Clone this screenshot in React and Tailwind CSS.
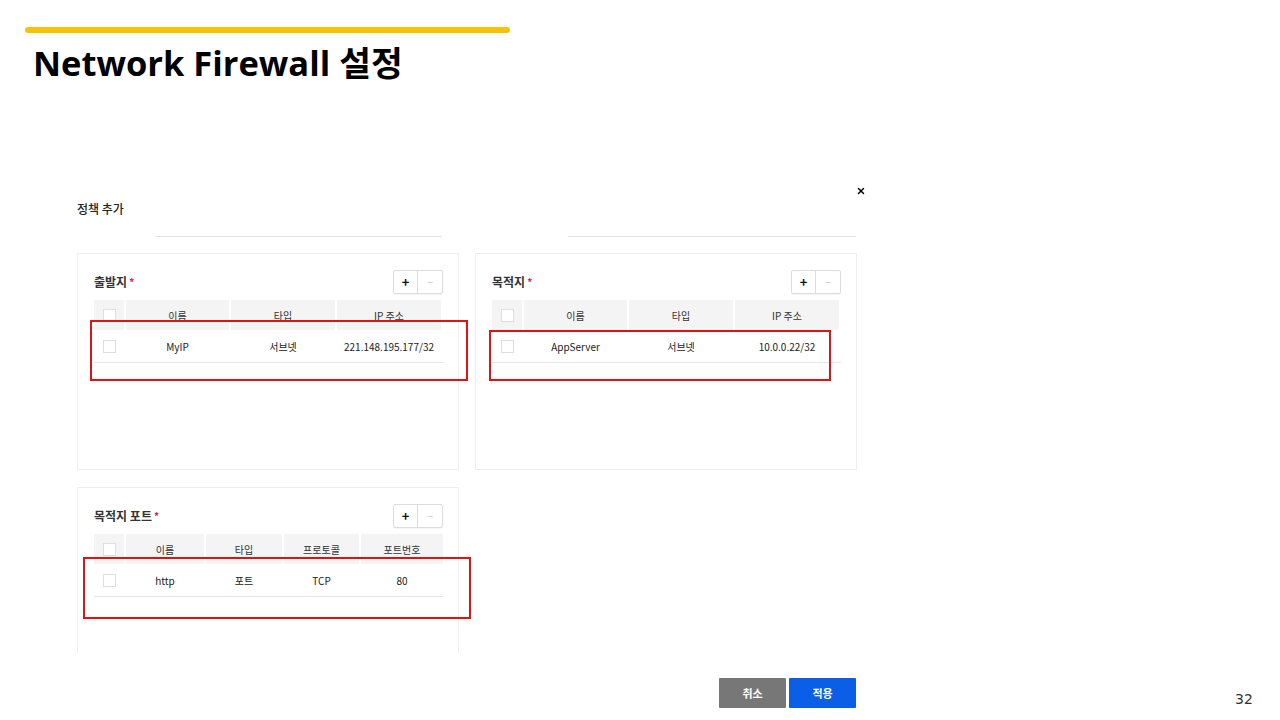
import React from "react";
import { X } from "lucide-react";

const uiFont = { fontFamily: '"Noto Sans CJK KR", "Noto Sans", sans-serif' };

const PlusMinus = () => (
  <div className="flex border border-[#dcdcdc] rounded-[2px] bg-white shadow-[0_1px_1px_rgba(0,0,0,0.04)]">
    <div className="w-6 h-[22px] flex items-center justify-center text-[13px] font-bold text-[#111] border-r border-[#dcdcdc]">+</div>
    <div className="w-6 h-[22px] flex items-center justify-center text-[11px] text-[#c8c8c8]">−</div>
  </div>
);

const Check = () => <div className="w-[13px] h-[13px] border border-[#dedede] bg-white" />;

const DataTable = ({ cols, widths, row }) => (
  <div className="w-[349px]">
    <div className="flex gap-[2px] h-[30px]">
      <div className="w-[30px] bg-[#f4f4f4] flex items-center justify-center">
        <Check />
      </div>
      {cols.map((c, i) => (
        <div
          key={c}
          className="bg-[#f4f4f4] flex items-center justify-center text-[10px] text-[#333]"
          style={{ width: widths[i] }}
        >
          {c}
        </div>
      ))}
    </div>
    <div className="flex gap-[2px] h-[33px] border-b border-[#e6e6e6] items-center">
      <div className="w-[30px] flex items-center justify-center">
        <Check />
      </div>
      {row.map((c, i) => (
        <div
          key={i}
          className="flex items-center justify-center text-[10px] text-[#222]"
          style={{ width: widths[i] }}
        >
          {c}
        </div>
      ))}
    </div>
  </div>
);

const Panel = ({ title, children, className }) => (
  <div className={`w-[382px] border border-[#eeeeee] pt-4 pl-4 pr-[16px] ${className}`}>
    <div className="flex items-center justify-between w-[349px]">
      <div className="text-[12px] font-bold text-[#333] flex items-center">
        {title}
        <span className="text-[#e0203a] text-[10px] ml-[2px] leading-none">*</span>
      </div>
      <PlusMinus />
    </div>
    <div className="mt-[6px]">{children}</div>
  </div>
);

export default function App() {
  return (
    <div className="relative w-[1280px] h-[720px] bg-white overflow-hidden">
      <div className="ml-[25px] mt-[27px] w-[485px] h-[6px] rounded-full bg-[#fac100]" />
      <h1
        className="ml-[33px] mt-[6px] text-[34.5px] font-bold text-black leading-[48px]"
        style={{ fontFamily: '"Open Sans", "Noto Sans CJK KR", sans-serif' }}
      >
        Network Firewall 설정
      </h1>

      <div className="ml-[77px] mt-[93px] w-[790px]" style={uiFont}>
        <div className="flex justify-between h-[56px]">
          <div className="mt-[20px] text-[12px] font-medium text-[#222]">정책 추가</div>
          <X size={10} strokeWidth={3.5} className="mt-[6px] mr-[1px] text-black" />
        </div>
        <div className="flex pl-[78px] gap-[126px]">
          <div className="w-[287px] h-px bg-[#e2e2e2]" />
          <div className="w-[288px] h-px bg-[#e2e2e2]" />
        </div>

        <div className="grid grid-cols-[382px_382px] gap-x-[16px] gap-y-[17px] mt-[16px]">
          <Panel title="출발지" className="h-[217px]">
            <DataTable
              cols={["이름", "타입", "IP 주소"]}
              widths={[103, 104, 104]}
              row={["MyIP", "서브넷", "221.148.195.177/32"]}
            />
          </Panel>
          <Panel title="목적지" className="h-[217px]">
            <DataTable
              cols={["이름", "타입", "IP 주소"]}
              widths={[103, 104, 104]}
              row={["AppServer", "서브넷", "10.0.0.22/32"]}
            />
          </Panel>
          <Panel title="목적지 포트" className="h-[166px] border-b-0">
            <DataTable
              cols={["이름", "타입", "프로토콜", "포트번호"]}
              widths={[78, 76, 75, 82]}
              row={["http", "포트", "TCP", "80"]}
            />
          </Panel>
        </div>
      </div>

      <div className="absolute left-[719px] top-[678px] flex gap-[3px]" style={uiFont}>
        <button className="w-[67px] h-[30px] bg-[#777777] text-white text-[11px] font-bold rounded-[1px]">취소</button>
        <button className="w-[67px] h-[30px] bg-[#0b5ee6] text-white text-[11px] font-bold rounded-[1px]">적용</button>
      </div>

      <div className="absolute left-[90px] top-[320px] w-[378px] h-[61px] border-2 border-[#dc1414]" />
      <div className="absolute left-[489px] top-[330px] w-[342px] h-[51px] border-2 border-[#dc1414]" />
      <div className="absolute left-[83px] top-[557px] w-[388px] h-[62px] border-2 border-[#dc1414]" />

      <div
        className="absolute left-[1235px] top-[689px] text-[14px] text-[#333]"
        style={{ fontFamily: '"DejaVu Sans", sans-serif' }}
      >
        32
      </div>
    </div>
  );
}
